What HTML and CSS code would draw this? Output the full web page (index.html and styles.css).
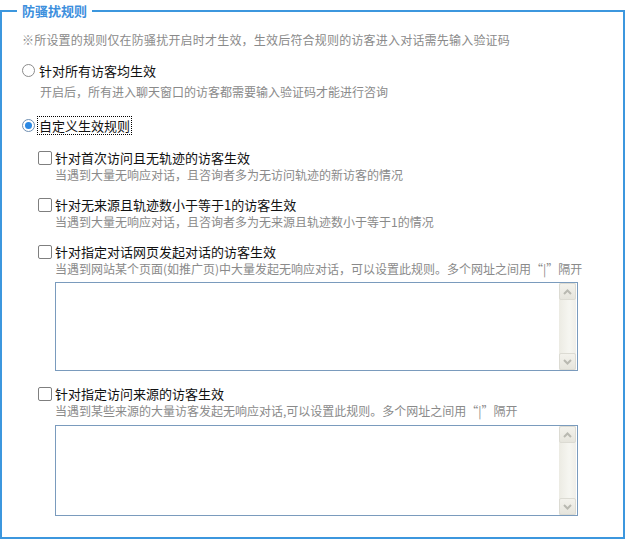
FILE: index.html
```html
<!DOCTYPE html>
<html lang="zh-CN">
<head>
<meta charset="utf-8">
<title>防骚扰规则</title>
<link rel="stylesheet" href="styles.css">
</head>
<body>
<fieldset class="panel">
  <legend class="panel-title">防骚扰规则</legend>
  <p class="notice">※所设置的规则仅在防骚扰开启时才生效，生效后符合规则的访客进入对话需先输入验证码</p>

  <div class="radio-row">
    <span class="radio"></span>
    <span class="label">针对所有访客均生效</span>
  </div>
  <p class="radio-desc">开启后，所有进入聊天窗口的访客都需要输入验证码才能进行咨询</p>

  <div class="radio-row radio-row-2">
    <span class="radio checked"></span>
    <span class="label focused">自定义生效规则</span>
  </div>

  <div class="rule first">
    <div class="check-row"><span class="checkbox"></span><span class="label">针对首次访问且无轨迹的访客生效</span></div>
    <p class="desc">当遇到大量无响应对话，且咨询者多为无访问轨迹的新访客的情况</p>
  </div>

  <div class="rule">
    <div class="check-row"><span class="checkbox"></span><span class="label">针对无来源且轨迹数小于等于1的访客生效</span></div>
    <p class="desc">当遇到大量无响应对话，且咨询者多为无来源且轨迹数小于等于1的情况</p>
  </div>

  <div class="rule">
    <div class="check-row"><span class="checkbox"></span><span class="label">针对指定对话网页发起对话的访客生效</span></div>
    <p class="desc">当遇到网站某个页面(如推广页)中大量发起无响应对话，可以设置此规则。多个网址之间用“|”隔开</p>
    <div class="textbox tb1">
      <textarea class="text-input"></textarea>
      <div class="scrollbar">
        <span class="sb-btn"><svg width="9" height="6" viewBox="0 0 9 6"><path d="M1 5 L4.5 1.5 L8 5" fill="none" stroke="#b9b9b1" stroke-width="2"/></svg></span>
        <span class="sb-track"></span>
        <span class="sb-btn"><svg width="9" height="6" viewBox="0 0 9 6"><path d="M1 1 L4.5 4.5 L8 1" fill="none" stroke="#b9b9b1" stroke-width="2"/></svg></span>
      </div>
    </div>
  </div>

  <div class="rule last">
    <div class="check-row"><span class="checkbox"></span><span class="label">针对指定访问来源的访客生效</span></div>
    <p class="desc">当遇到某些来源的大量访客发起无响应对话,可以设置此规则。多个网址之间用“|”隔开</p>
    <div class="textbox tb2">
      <textarea class="text-input"></textarea>
      <div class="scrollbar">
        <span class="sb-btn"><svg width="9" height="6" viewBox="0 0 9 6"><path d="M1 5 L4.5 1.5 L8 5" fill="none" stroke="#b9b9b1" stroke-width="2"/></svg></span>
        <span class="sb-track"></span>
        <span class="sb-btn"><svg width="9" height="6" viewBox="0 0 9 6"><path d="M1 1 L4.5 4.5 L8 1" fill="none" stroke="#b9b9b1" stroke-width="2"/></svg></span>
      </div>
    </div>
  </div>
</fieldset>
</body>
</html>
```

FILE: styles.css
```css
html, body {
  margin: 0;
  padding: 0;
  background: #fff;
}
body {
  font-family: "Noto Sans CJK SC", "Noto Sans", sans-serif;
  width: 625px;
  height: 539px;
  overflow: hidden;
}
p { margin: 0; }

.panel {
  box-sizing: border-box;
  margin: 0;
  width: 625px;
  height: 539px;
  border: 2px solid #3c97de;
  padding: 0 20px 20px 20px;
}
.panel-title {
  margin-left: -5px;
  padding: 0 5px;
  font-size: 13px;
  line-height: 22px;
  font-weight: bold;
  color: #3d8fdd;
}
.notice {
  margin-top: 9px;
  font-size: 12px;
  line-height: 18px;
  color: #8a8a8a;
  letter-spacing: 0.2px;
}

.radio-row {
  display: flex;
  align-items: center;
  height: 18px;
  margin-top: 12px;
}
.radio-row-2 { margin-top: 15px; }
.radio {
  box-sizing: border-box;
  width: 13px;
  height: 13px;
  border: 1px solid #8c8c8c;
  border-radius: 50%;
  background: #fff;
  margin-right: 4px;
  display: flex;
  align-items: center;
  justify-content: center;
}
.radio.checked { border-color: #6f8fb2; }
.radio.checked::after {
  content: "";
  width: 7px;
  height: 7px;
  border-radius: 50%;
  background: #2b88e3;
}
.label {
  font-size: 13px;
  line-height: 17px;
  color: #111;
}
.focused {
  outline: 1px dotted #000;
  outline-offset: 0;
  padding: 0 1px;
  margin-left: -1px;
}
.radio-desc {
  margin-top: 4px;
  padding-left: 18px;
  font-size: 12px;
  line-height: 18px;
  color: #8a8a8a;
}

.rule {
  margin-top: 13px;
  padding-left: 16px;
}
.rule.first { margin-top: 15px; }
.rule.last { margin-top: 14px; }
.check-row {
  display: flex;
  align-items: center;
  height: 17px;
}
.checkbox {
  box-sizing: border-box;
  width: 14px;
  height: 14px;
  border: 1px solid #7f7f7f;
  border-radius: 2px;
  background: #fff;
  margin-right: 3px;
}
.desc {
  padding-left: 17px;
  font-size: 12px;
  line-height: 17px;
  color: #8a8a8a;
}

.textbox {
  box-sizing: border-box;
  display: flex;
  width: 523px;
  margin-top: 5px;
  margin-left: 17px;
  border: 1px solid #7a9bbd;
  background: #fff;
}
.tb1 { height: 89px; }
.tb2 { height: 91px; margin-top: 6px; }
.text-input {
  flex: 1;
  border: none;
  outline: none;
  resize: none;
  margin: 0;
  padding: 2px;
  background: #fff;
  font-family: inherit;
}
.scrollbar {
  width: 17px;
  margin-right: 1px;
  display: flex;
  flex-direction: column;
  background: linear-gradient(to right, #ecebe3, #f6f6f1 60%, #efeee8);
}
.sb-btn {
  box-sizing: border-box;
  height: 17px;
  border: 1px solid #dcdbd3;
  border-radius: 2px;
  background: linear-gradient(#f3f2ec, #e6e5dd);
  display: flex;
  align-items: center;
  justify-content: center;
}
.sb-track { flex: 1; }
```
